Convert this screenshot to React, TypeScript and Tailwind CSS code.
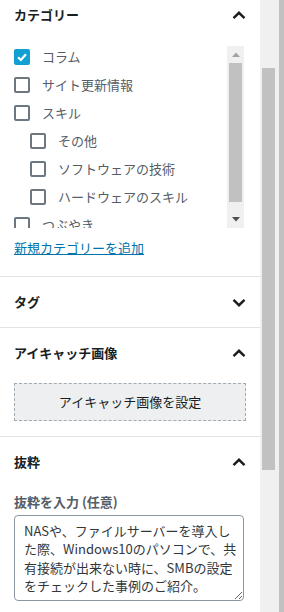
import React from "react";

const font = { fontFamily: '"Noto Sans CJK JP", "Noto Sans", sans-serif' };

function Chevron({ up }: { up: boolean }) {
  return (
    <svg width="24" height="24" viewBox="0 0 24 24" className="shrink-0">
      <path
        d={up ? "M6.5 15.2 L12 9.8 L17.5 15.2" : "M6.5 9.8 L12 15.2 L17.5 9.8"}
        fill="none"
        stroke="#191e23"
        strokeWidth="2.4"
      />
    </svg>
  );
}

function Box({ checked }: { checked?: boolean }) {
  if (checked)
    return (
      <span className="w-4 h-4 rounded-[2px] bg-[#11a0d2] flex items-center justify-center shrink-0">
        <svg width="12" height="12" viewBox="0 0 12 12">
          <path d="M2 6.2 L4.9 9 L10 3.2" fill="none" stroke="#fff" strokeWidth="2.2" />
        </svg>
      </span>
    );
  return <span className="w-4 h-4 rounded-[2px] border-2 border-[#6c7781] bg-white shrink-0" />;
}

const items: { label: string; child?: boolean; checked?: boolean }[] = [
  { label: "コラム", checked: true },
  { label: "サイト更新情報" },
  { label: "スキル" },
  { label: "その他", child: true },
  { label: "ソフトウェアの技術", child: true },
  { label: "ハードウェアのスキル", child: true },
  { label: "つぶやき" },
];

function Header({ title, up, h }: { title: string; up: boolean; h: string }) {
  return (
    <div className={`${h} flex items-center justify-between pl-[14px] pr-[9px]`}>
      <span className="text-[13px] font-semibold text-[#191e23] leading-[18px]">{title}</span>
      <Chevron up={up} />
    </div>
  );
}

export default function App() {
  return (
    <div className="flex w-[284px] h-[612px] overflow-hidden bg-white" style={font}>
      <div className="w-[260px] flex flex-col bg-white">
        {/* Category */}
        <div className="pb-[19px]">
          <div className="h-[30px] flex items-center justify-between pl-[14px] pr-[9px]">
            <span className="text-[13px] font-semibold text-[#191e23] leading-[18px]">カテゴリー</span>
            <Chevron up />
          </div>
          <div className="mt-[16px] ml-[14px] w-[230px] h-[182px] flex">
            <div className="flex-1 overflow-hidden pt-[3px] flex flex-col gap-[12px]">
              {items.map((it) => (
                <div key={it.label} className={`flex items-center h-4 gap-[12px] ${it.child ? "pl-[16px]" : ""}`}>
                  <Box checked={it.checked} />
                  <span className="text-[13px] leading-4 text-[#555d66] whitespace-nowrap">{it.label}</span>
                </div>
              ))}
            </div>
            <div className="w-[17px] bg-[#f0f0f0] flex flex-col">
              <div className="h-[17px] flex items-center justify-center">
                <svg width="8" height="5" viewBox="0 0 8 5">
                  <path d="M0 5 L4 0.5 L8 5 Z" fill="#a3a3a3" />
                </svg>
              </div>
              <div className="mx-[2px] h-[139px] bg-[#c1c1c1]" />
              <div className="flex-1" />
              <div className="h-[17px] flex items-center justify-center">
                <svg width="8" height="5" viewBox="0 0 8 5">
                  <path d="M0 0 L4 4.5 L8 0 Z" fill="#505050" />
                </svg>
              </div>
            </div>
          </div>
          <div className="mt-[11px] pl-[14px] h-[18px] text-[13px] leading-[18px]">
            <a href="#" className="text-[13px] leading-[18px] text-[#0073aa] underline">新規カテゴリーを追加</a>
          </div>
        </div>

        {/* Tag */}
        <div className="border-t border-[#e2e4e7]">
          <Header title="タグ" up={false} h="h-[50px]" />
        </div>

        {/* Featured image */}
        <div className="border-t border-[#e2e4e7] pb-[15px]">
          <Header title="アイキャッチ画像" up h="h-[50px]" />
          <div className="mt-[5px] mx-[14px] h-[38px] border border-dashed border-[#a2aab2] bg-[#edeff0] flex items-center justify-center">
            <span className="text-[13px] text-[#191e23]">アイキャッチ画像を設定</span>
          </div>
        </div>

        {/* Excerpt */}
        <div className="border-t border-[#e2e4e7]">
          <Header title="抜粋" up h="h-[50px]" />
          <div className="mt-[6px] pl-[14px] text-[13px] leading-[18px] font-semibold text-[#555d66]">抜粋を入力 (任意)</div>
          <textarea
            readOnly
            className="block mt-[4px] ml-[14px] w-[230px] h-[86px] border border-[#8d96a0] rounded-[4px] pl-[9px] pr-[4px] pt-[6px] text-[13px] leading-[18.3px] text-[#32373c] outline-none resize-y"
            style={font}
            value={"NASや、ファイルサーバーを導入し\nた際、Windows10のパソコンで、共\n有接続が出来ない時に、SMBの設定\nをチェックした事例のご紹介。"}
          />
        </div>
      </div>

      {/* page scrollbar */}
      <div className="w-[19px] bg-[#f0f0f0] flex flex-col">
        <div className="mt-[68px] ml-[2px] w-[13px] h-[402px] bg-[#c1c1c1]" />
      </div>
      <div className="w-[5px] bg-[#c1c1c1]" />
    </div>
  );
}
